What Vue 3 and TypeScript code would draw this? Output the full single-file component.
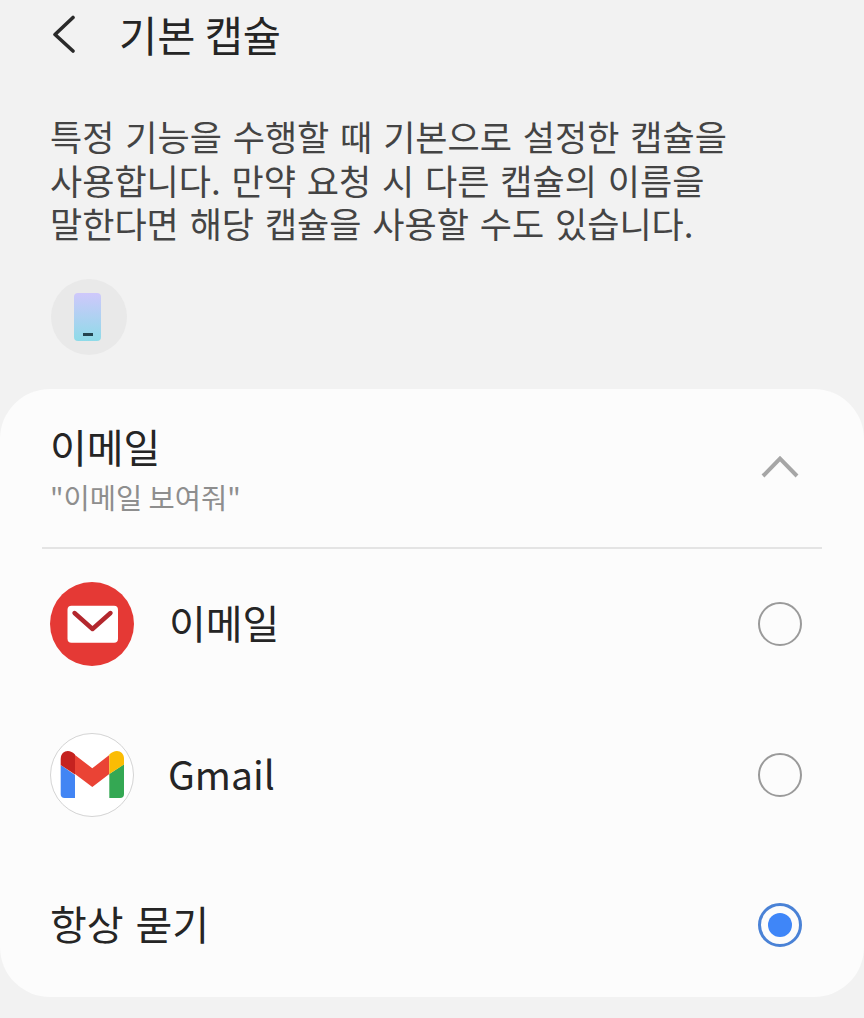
<script setup lang="ts">
interface AppOption {
  id: string
  label: string
  icon?: 'email' | 'gmail'
  selected?: boolean
}

const options: AppOption[] = [
  { id: 'email', label: '이메일', icon: 'email' },
  { id: 'gmail', label: 'Gmail', icon: 'gmail' },
  { id: 'ask', label: '항상 묻기', selected: true }
]
</script>

<template>
  <div class="page">
    <header class="top-bar">
      <svg class="back" width="28" height="40" viewBox="0 0 28 40">
        <path d="M23 2.500 L5 19.500 L23 36" fill="none" stroke="#2a2a2a" stroke-width="3.600" stroke-linecap="round" stroke-linejoin="round" />
      </svg>
      <h1 class="title">기본 캡슐</h1>
    </header>

    <p class="desc">특정 기능을 수행할 때 기본으로 설정한 캡슐을<br />사용합니다. 만약 요청 시 다른 캡슐의 이름을<br />말한다면 해당 캡슐을 사용할 수도 있습니다.</p>

    <div class="capsule-badge">
      <div class="phone"><span class="phone-bar" /></div>
    </div>

    <section class="card">
      <div class="card-head">
        <div class="head-text">
          <div class="head-title">이메일</div>
          <div class="head-sub">"이메일 보여줘"</div>
        </div>
        <svg class="chevron" width="40" height="24" viewBox="0 0 40 24">
          <path d="M3 22 L20 4.500 L37 22" fill="none" stroke="#a6a6a6" stroke-width="4" />
        </svg>
      </div>

      <div class="rows">
        <div v-for="opt in options" :key="opt.id" class="row">
          <svg v-if="opt.icon === 'email'" class="app-icon" viewBox="0 0 84 84">
            <circle cx="42" cy="42" r="42" fill="#e53935" />
            <rect x="17.500" y="23.700" width="50.500" height="37" rx="4" fill="#fff" />
            <path d="M24.500 31 L42.500 47 L60.500 31" fill="none" stroke="#b3272d" stroke-width="4.400" stroke-linecap="round" stroke-linejoin="round" />
          </svg>
          <svg v-else-if="opt.icon === 'gmail'" class="app-icon" viewBox="0 0 84 84">
            <circle cx="42" cy="42" r="41.500" fill="#fff" stroke="#d4d4d4" />
            <path d="M10.700 32 L25 42 V65 H14.700 Q10.700 65 10.700 61 Z" fill="#4285f4" />
            <path d="M59.300 41 L74 31.300 V61 Q74 65 70 65 H59.300 Z" fill="#34a853" />
            <path d="M25 22 L42.300 35.300 L59.300 22 V41 L42.300 54 L25 41 Z" fill="#ea4335" />
            <path d="M10.700 32 V26 C10.700 17 20 15.500 25 21.500 V41.500 Z" fill="#c5221f" />
            <path d="M59.300 21.500 C65 15.500 74 17 74 26 V31.500 L59.300 41 Z" fill="#fbbc04" />
          </svg>
          <span class="row-label" :class="{ latin: opt.id === 'gmail' }">{{ opt.label }}</span>
          <span class="radio" :class="{ on: opt.selected }"><span v-if="opt.selected" class="dot" /></span>
        </div>
      </div>
    </section>
  </div>
</template>

<style>
html,
body {
  margin: 0;
  background: #f2f2f2;
}
</style>

<style scoped>
.page {
  width: 864px;
  height: 1018px;
  overflow: hidden;
  background: #f2f2f2;
  font-family: 'Noto Sans CJK KR', 'Noto Sans', sans-serif;
  color: #252525;
}

.top-bar {
  display: flex;
  align-items: center;
  height: 70px;
  padding-left: 50px;
  gap: 41px;
}

.title {
  margin: -2px 0 0;
  font-size: 41.500px;
  font-weight: 400;
  line-height: 70px;
}

.desc {
  margin: 44px 0 0 50px;
  font-size: 35px;
  line-height: 43.500px;
  word-spacing: 3px;
  color: #444;
  white-space: nowrap;
}

.capsule-badge {
  width: 76px;
  height: 76px;
  margin: 34px 0 0 51px;
  border-radius: 50%;
  background: #e9e9e9;
  display: flex;
  align-items: center;
  justify-content: center;
}

.phone {
  width: 27px;
  height: 48px;
  margin-right: 3px;
  border-radius: 4px;
  background: linear-gradient(180deg, #cfc8fb 0%, #8edbe8 100%);
  display: flex;
  justify-content: center;
  align-items: flex-end;
  padding-bottom: 5px;
  box-sizing: border-box;
}

.phone-bar {
  width: 10px;
  height: 3px;
  background: #24444f;
}

.card {
  margin-top: 34px;
  height: 608px;
  border-radius: 50px;
  background: #fcfcfc;
  padding: 0 42px;
  box-sizing: border-box;
}

.card-head {
  height: 160px;
  padding: 0 22px 0 8px;
  border-bottom: 2px solid #e4e4e4;
  display: flex;
  justify-content: space-between;
  align-items: center;
  box-sizing: border-box;
}

.head-text {
  padding-top: 2px;
}

.head-title {
  font-size: 40px;
  line-height: 50px;
  color: #252525;
}

.head-sub {
  margin-top: 6px;
  font-size: 28.500px;
  line-height: 40px;
  color: #8e8e8e;
}

.chevron {
  margin-bottom: 3px;
}

.rows {
  display: flex;
  flex-direction: column;
}

.row {
  height: 150px;
  display: flex;
  align-items: center;
  padding: 0 20px 0 8px;
}

.row:first-child {
  margin-bottom: 1px;
}

.app-icon {
  width: 84px;
  height: 84px;
  flex: none;
  margin-right: 35px;
}

.row-label {
  flex: 1;
  font-size: 40px;
  padding-bottom: 3px;
  word-spacing: 3px;
  color: #252525;
}

.row-label.latin {
  font-size: 39px;
  margin-left: -1px;
}

.radio {
  width: 44px;
  height: 44px;
  box-sizing: border-box;
  border: 2px solid #9a9a9a;
  border-radius: 50%;
  display: flex;
  align-items: center;
  justify-content: center;
}

.radio.on {
  border: 3px solid #4a82d6;
}

.dot {
  width: 24px;
  height: 24px;
  border-radius: 50%;
  background: #3f86f8;
}
</style>
